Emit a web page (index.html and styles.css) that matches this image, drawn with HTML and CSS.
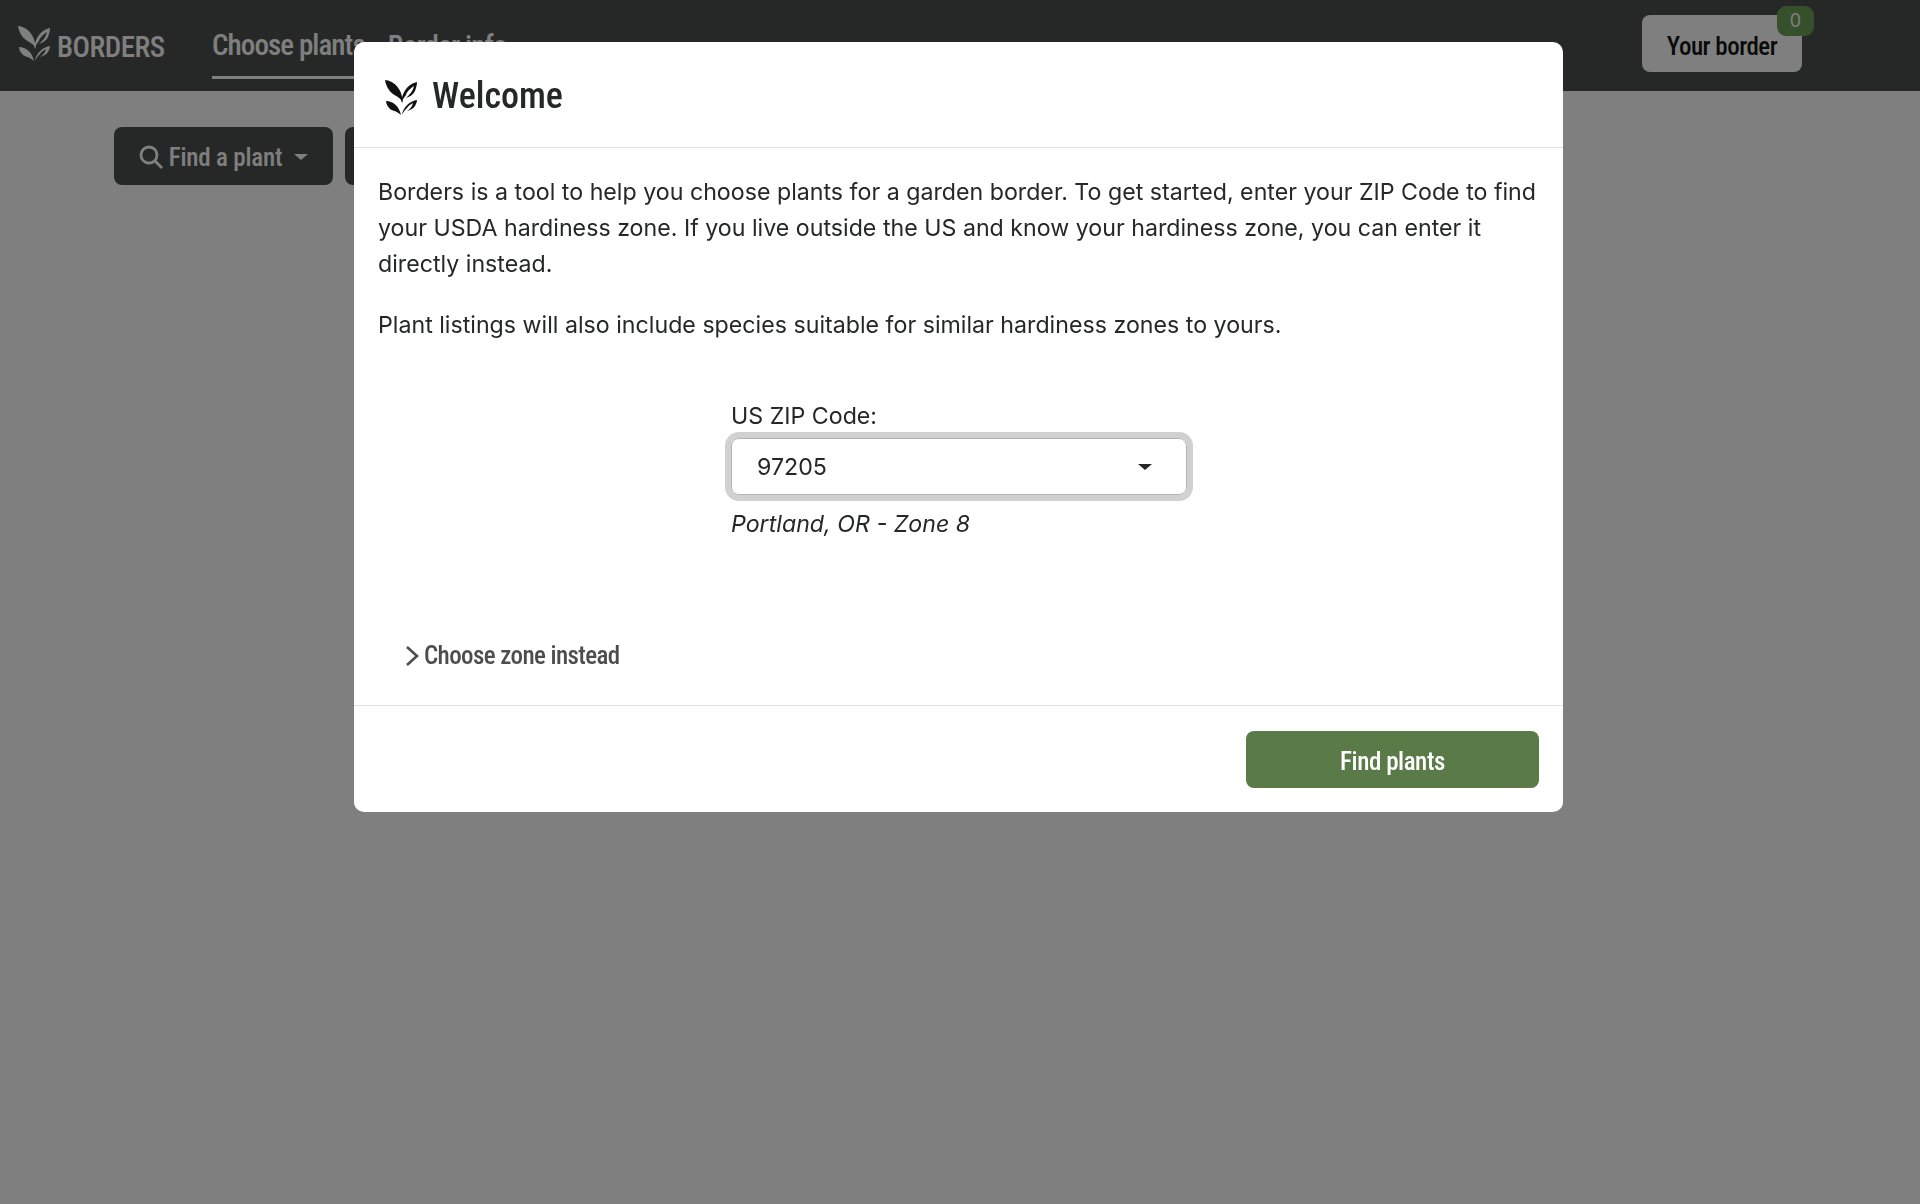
FILE: index.html
```html
<!DOCTYPE html>
<html lang="en">
<head>
    <meta charset="UTF-8">
    <meta name="viewport" content="width=device-width, initial-scale=1.0">
    <title>Borders</title>
    <link rel="stylesheet" href="styles.css">
</head>
<body>
    <nav class="navbar">
        <a class="brand" href="#">
            <svg class="leaf-icon" viewBox="0 0 32 36"><use href="#leaves"/></svg>
            BORDERS
        </a>
        <a class="nav-link active" href="#">Choose plants</a>
        <a class="nav-link" href="#">Border info</a>
        <button class="border-btn">Your border<span class="badge">0</span></button>
    </nav>
    <div class="toolbar">
        <button class="tool-btn">
            <svg class="search-icon" viewBox="0 0 24 24"><circle cx="10" cy="10" r="8"/><path d="M16 16l7 7"/></svg>
            Find a plant<span class="caret"></span>
        </button>
        <button class="tool-btn">Filter</button>
    </div>

    <div class="backdrop"></div>

    <div class="modal">
        <header class="modal-header">
            <svg class="leaf-icon modal-icon" viewBox="0 0 32 36">
                <g id="leaves">
                    <path d="M0 0C8 1 17 7 18 23C15 17 12 17 8 14C4 11 1 6 0 0Z"/>
                    <path d="M32 2C25 3 17 10 16 23C17 20 19 18 21 15C22 11 26 8 29 6C28 11 25 14 21 18C24 17 28 15 30 11C31 8 32 5 32 2Z"/>
                    <path d="M1 21C8 21 14 26 16 35C12 31 8 31 5 29C3 27 1 24 1 21Z"/>
                    <path d="M32 20C25 21 18 27 17 35C18 32 20 30 22 28C23 26 25 25 28 23C27 27 25 29 22 31C25 30 28 29 30 26C31 24 32 22 32 20Z"/>
                </g>
            </svg>
            <h2>Welcome</h2>
        </header>
        <div class="modal-body">
            <p>Borders is a tool to help you choose plants for a garden border. To get started, enter your ZIP Code to find your USDA hardiness zone. If you live outside the US and know your hardiness zone, you can enter it directly instead.</p>
            <p>Plant listings will also include species suitable for similar hardiness zones to yours.</p>
            <div class="zip-form">
                <label for="zip">US ZIP Code:</label>
                <div class="select-box" id="zip">97205<span class="caret dark"></span></div>
                <em>Portland, OR - Zone 8</em>
            </div>
            <a class="zone-toggle" href="#">
                <svg class="chevron" viewBox="0 0 14 22"><path d="M2 2l10 9-10 9"/></svg>
                Choose zone instead
            </a>
        </div>
        <footer class="modal-footer">
            <button class="primary-btn">Find plants</button>
        </footer>
    </div>
</body>
</html>
```

FILE: styles.css
```css
* {
    box-sizing: border-box;
}

body {
    font-family: Inter, "Liberation Sans", sans-serif;
    font-size: 23.2px;
    line-height: 36px;
    color: #262827;
    background-color: #fff;
    margin: 0;
    height: 1204px;
    overflow: hidden;
}

a {
    text-decoration: none;
}

button {
    border: none;
    font-family: inherit;
}

.navbar,
.tool-btn,
.modal-header h2,
.zone-toggle,
.primary-btn {
    font-family: Roboto, "Open Sans", sans-serif;
    font-stretch: 75%;
}

.navbar {
    display: flex;
    align-items: stretch;
    height: 91px;
    padding-left: 18px;
    background-color: #4c504e;
}

.brand {
    display: flex;
    align-items: center;
    gap: 7px;
    width: 194px;
    padding-top: 2px;
    color: #fff;
    font-size: 29px;
    font-weight: 500;
    letter-spacing: -0.5px;
}

.brand .leaf-icon {
    width: 32px;
    height: 36px;
    margin-top: -5px;
    fill: #fff;
}

.nav-link {
    display: flex;
    align-items: center;
    height: 79px;
    margin-right: 23px;
    padding-top: 13px;
    color: #fff;
    font-size: 29px;
    font-weight: 500;
    letter-spacing: -0.9px;
}

.nav-link.active {
    border-bottom: 3px solid #fff;
}

.border-btn {
    position: relative;
    align-self: flex-start;
    width: 160px;
    height: 57px;
    margin: 15px 118px 0 auto;
    padding-top: 7px;
    border-radius: 8px;
    background-color: #fff;
    color: #141414;
    font-family: inherit;
    font-stretch: inherit;
    font-size: 25px;
    font-weight: 500;
    letter-spacing: -0.5px;
}

.badge {
    position: absolute;
    top: -9px;
    right: -12px;
    width: 37px;
    height: 30px;
    border-radius: 9px;
    background-color: #6aa054;
    color: #fff;
    font-family: Inter, sans-serif;
    font-size: 18px;
    font-weight: 400;
    line-height: 30px;
    letter-spacing: 0;
}

.toolbar {
    display: flex;
    gap: 12px;
    padding: 36px 0 0 114px;
}

.tool-btn {
    display: flex;
    align-items: center;
    justify-content: center;
    width: 219px;
    height: 58px;
    padding-top: 3px;
    border-radius: 8px;
    background-color: #4c504e;
    color: #fff;
    font-size: 25px;
    font-weight: 500;
    letter-spacing: -0.2px;
}

.search-icon {
    width: 24px;
    height: 24px;
    margin-right: 6px;
    fill: none;
    stroke: #fff;
    stroke-width: 2.8;
}

.caret {
    width: 0;
    height: 0;
    margin-left: 12px;
    border-top: 6px solid #fff;
    border-left: 7px solid transparent;
    border-right: 7px solid transparent;
}

.caret.dark {
    border-top-color: #262827;
    margin-left: 0;
}

.backdrop {
    position: fixed;
    inset: 0;
    background-color: rgba(0, 0, 0, 0.5);
}

.modal {
    position: absolute;
    top: 42px;
    left: 354px;
    width: 1209px;
    height: 770px;
    display: flex;
    flex-direction: column;
    border-radius: 10px;
    background-color: #fff;
}

.modal-header {
    display: flex;
    align-items: center;
    gap: 15px;
    height: 106px;
    padding: 0 31px;
    border-bottom: 1px solid #dee2e6;
}

.modal-icon {
    width: 32px;
    height: 36px;
    margin-top: 7px;
    fill: #111;
}

.modal-header h2 {
    margin: 2px 0 0;
    font-size: 36px;
    font-weight: 500;
}

.modal-body {
    flex: 1;
    padding: 26px 24px 0;
}

.modal-body p {
    margin: 0 0 25px;
}

.zip-form {
    display: flex;
    flex-direction: column;
    width: 456px;
    margin: 55px 0 0 353px;
}

.select-box {
    display: flex;
    align-items: center;
    justify-content: space-between;
    height: 57px;
    margin: 4px 0 11px;
    padding: 0 34px 0 25px;
    border: 1px solid #b4b4b4;
    border-radius: 8px;
    box-shadow: 0 0 0 6px #d0d1d0;
}

.zone-toggle {
    display: flex;
    align-items: center;
    gap: 5px;
    margin: 96px 0 0 27px;
    color: #4d4d4d;
    font-size: 25px;
    font-weight: 500;
    letter-spacing: -0.6px;
}

.chevron {
    width: 14px;
    height: 22px;
    fill: none;
    stroke: #4d4d4d;
    stroke-width: 2.6;
}

.modal-footer {
    display: flex;
    justify-content: flex-end;
    height: 107px;
    padding: 25px 24px 0;
    border-top: 1px solid #dee2e6;
}

.primary-btn {
    width: 293px;
    height: 57px;
    padding-top: 4px;
    border-radius: 8px;
    background-color: #5a7a48;
    color: #fff;
    font-size: 25px;
    font-weight: 500;
    letter-spacing: -0.45px;
}
```
